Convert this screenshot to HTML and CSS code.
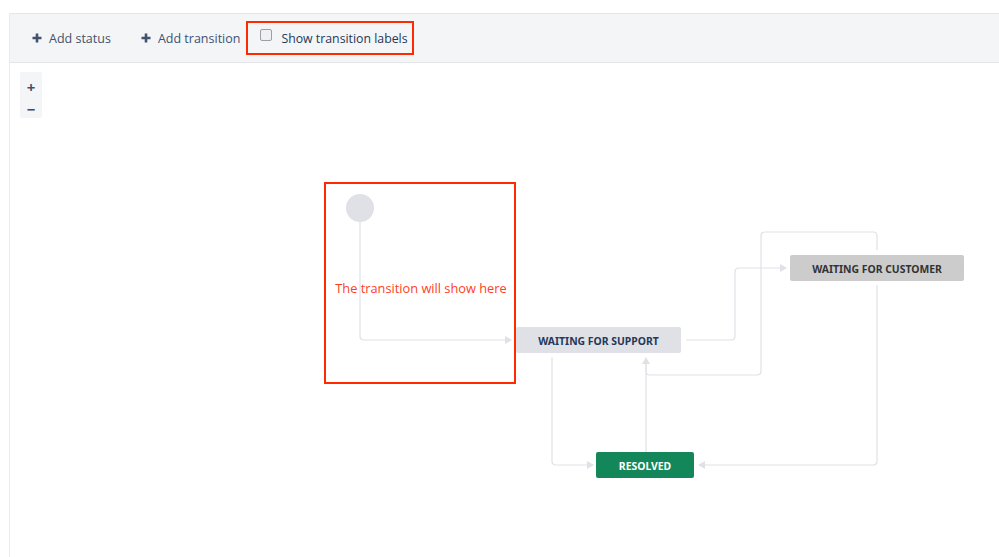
FILE: index.html
```html
<!DOCTYPE html>
<html>
<head>
<meta charset="utf-8">
<link rel="stylesheet" href="styles.css">
</head>
<body>
<div class="page">
  <div class="toolbar">
    <button class="tool">
      <svg class="plus" viewBox="0 0 10 10"><path d="M5 0.5V9.5M0.5 5H9.5" /></svg>
      <span>Add status</span>
    </button>
    <button class="tool">
      <svg class="plus" viewBox="0 0 10 10"><path d="M5 0.5V9.5M0.5 5H9.5" /></svg>
      <span>Add transition</span>
    </button>
    <label class="labels-toggle">
      <span class="checkbox"></span>
      <span>Show transition labels</span>
    </label>
  </div>
  <div class="canvas">
    <div class="zoom">
      <span class="zoom-btn">+</span>
      <span class="zoom-btn">&minus;</span>
    </div>
    <svg class="edges" viewBox="10 63 989 494" width="989" height="494">
      <g fill="none" stroke="#dfe1e6" stroke-width="1.2">
        <path d="M360 222 V336 Q360 340 364 340 H507" />
        <path d="M686 340 H731 Q735 340 735 336 V272 Q735 268 739 268 H782" />
        <path d="M877 250 V236 Q877 232 873 232 H765 Q761 232 761 236 V371 Q761 375 757 375 H650 Q646 375 646 371 V362" />
        <path d="M646 452 V362" />
        <path d="M877 285 V461 Q877 465 873 465 H704" />
        <path d="M552 357 V461 Q552 465 556 465 H589" />
      </g>
      <g fill="#dfe1e6">
        <circle cx="360" cy="208" r="14" />
        <path d="M505 336 L512 340 L505 344 Z" />
        <path d="M780 264 L787 268 L780 272 Z" />
        <path d="M642 364 L646 357 L650 364 Z" />
        <path d="M705 461 L698 465 L705 469 Z" />
        <path d="M587 461 L594 465 L587 469 Z" />
      </g>
    </svg>
    <div class="highlight"><span>The transition will show here</span></div>
    <div class="status s-support">WAITING FOR SUPPORT</div>
    <div class="status s-customer">WAITING FOR CUSTOMER</div>
    <div class="status s-resolved">RESOLVED</div>
  </div>
</div>
</body>
</html>
```

FILE: styles.css
```css
html, body {
  margin: 0;
  padding: 0;
  background: #ffffff;
  font-family: "Open Sans", "Noto Sans", sans-serif;
}
.page {
  margin-top: 13px;
  margin-left: 9px;
  height: 544px;
  border-left: 1px solid #ebecf0;
  display: flex;
  flex-direction: column;
}
.toolbar {
  height: 48px;
  background: #f4f5f7;
  border-top: 1px solid #e4e5e8;
  border-bottom: 1px solid #e4e5e8;
  display: flex;
  align-items: center;
  padding-left: 22px;
}
.tool {
  border: 0;
  background: transparent;
  padding: 0;
  margin: 0 30px 0 0;
  display: flex;
  align-items: center;
  font-family: inherit;
  font-size: 12.5px;
  color: #42526e;
  cursor: pointer;
}
.tool:nth-child(2) {
  margin-right: 6px;
}
.plus {
  width: 10px;
  height: 10px;
  margin-right: 7px;
}
.plus path {
  stroke: #42526e;
  stroke-width: 2.6;
}
.labels-toggle {
  display: flex;
  align-items: center;
  height: 30px;
  border: 2px solid #ff2a00;
  padding: 0 4px 0 12px;
  font-size: 12.3px;
  color: #253858;
}
.checkbox {
  width: 10px;
  height: 10px;
  border: 1px solid #9aa0a8;
  border-radius: 2px;
  background: #eef0f2;
  margin-right: 9px;
  margin-top: -6px;
}
.canvas {
  position: relative;
  flex: 1;
}
.zoom {
  margin: 9px 0 0 10px;
  width: 22px;
  height: 46px;
  box-sizing: border-box;
  padding-top: 4px;
  background: #f4f5f7;
  border-radius: 2px;
  display: flex;
  flex-direction: column;
  align-items: center;
  font-size: 15px;
  font-weight: 700;
  color: #42526e;
}
.zoom-btn {
  height: 22px;
  line-height: 22px;
}
.edges {
  position: absolute;
  left: 0;
  top: 0;
}
.highlight {
  position: absolute;
  left: 314px;
  top: 119px;
  width: 188px;
  height: 198px;
  border: 2px solid #ff2a00;
  display: flex;
  align-items: center;
  justify-content: center;
}
.highlight span {
  font-size: 12.8px;
  color: #ff3d1f;
  margin-top: 10px;
  margin-left: 2px;
}
.status {
  position: absolute;
  height: 26px;
  box-sizing: border-box;
  padding-top: 1px;
  border-radius: 2px;
  display: flex;
  align-items: center;
  justify-content: center;
  font-family: "Noto Sans", "Open Sans", sans-serif;
  font-size: 10.4px;
  font-weight: 700;
}
.s-support {
  left: 506px;
  top: 264px;
  width: 165px;
  background: #dfe1e6;
  color: #253858;
}
.s-customer {
  left: 780px;
  top: 192px;
  width: 174px;
  background: #cccccc;
  color: #333333;
}
.s-resolved {
  left: 586px;
  top: 389px;
  width: 98px;
  background: #14875a;
  color: #ffffff;
}
```
